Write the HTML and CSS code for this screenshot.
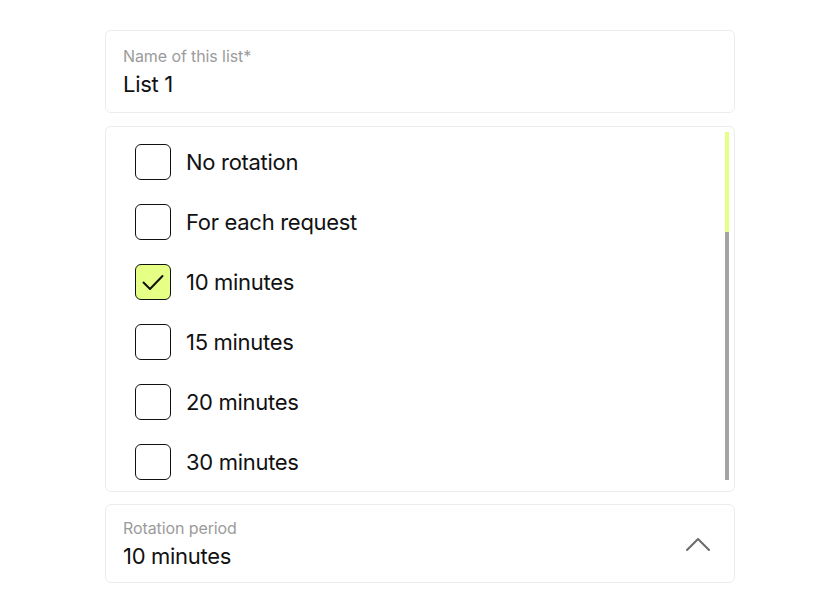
FILE: index.html
```html
<!DOCTYPE html>
<html>
<head>
<meta charset="utf-8">
<link rel="stylesheet" href="styles.css">
</head>
<body>
<main class="form">
  <section class="field name-field">
    <div class="field-label">Name of this list*</div>
    <div class="field-value">List 1</div>
  </section>

  <section class="options">
    <ul class="option-list">
      <li class="option"><span class="box"></span><span class="option-text">No rotation</span></li>
      <li class="option"><span class="box"></span><span class="option-text">For each request</span></li>
      <li class="option"><span class="box checked"><svg viewBox="0 0 36 36" width="36" height="36"><path d="M8.5 18.5 L15 25 L27.5 12" fill="none" stroke="#111" stroke-width="2" stroke-linecap="round" stroke-linejoin="round"/></svg></span><span class="option-text">10 minutes</span></li>
      <li class="option"><span class="box"></span><span class="option-text">15 minutes</span></li>
      <li class="option"><span class="box"></span><span class="option-text">20 minutes</span></li>
      <li class="option"><span class="box"></span><span class="option-text">30 minutes</span></li>
    </ul>
    <div class="scrollbar"><div class="thumb"></div></div>
  </section>

  <section class="field select">
    <div class="select-body">
      <div class="field-label">Rotation period</div>
      <div class="field-value">10 minutes</div>
    </div>
    <svg class="chevron" viewBox="0 0 26 16" width="26" height="16"><path d="M2 14 L13 3 L24 14" fill="none" stroke="#6b6b6b" stroke-width="2" stroke-linecap="round" stroke-linejoin="round"/></svg>
  </section>
</main>
</body>
</html>
```

FILE: styles.css
```css
* { box-sizing: border-box; }
html, body { margin: 0; padding: 0; background: #fff; }
body {
  font-family: Inter, "Noto Sans", "Liberation Sans", sans-serif;
  color: #111;
}
.form {
  width: 630px;
  margin: 30px 0 0 105px;
  display: flex;
  flex-direction: column;
}
.field {
  border: 1px solid #ececec;
  border-radius: 6px;
}
.name-field {
  height: 83px;
  padding: 15px 17px 14px;
}
.field-label {
  font-size: 16px;
  line-height: 20px;
  color: #9b9b9b;
  letter-spacing: -0.1px;
}
.field-value {
  margin-top: 4px;
  font-size: 22px;
  line-height: 28px;
  color: #111;
  letter-spacing: -0.3px;
}
.options {
  margin-top: 13px;
  border: 1px solid #ececec;
  border-radius: 6px;
  height: 366px;
  display: flex;
  padding: 5px 5px 0 0;
}
.option-list {
  list-style: none;
  margin: 0;
  padding: 0 0 0 29px;
  flex: 1;
  height: 359px;
  overflow: hidden;
}
.option {
  height: 60px;
  display: flex;
  align-items: center;
  gap: 15px;
}
.box {
  width: 36px;
  height: 36px;
  border: 1.5px solid #111;
  border-radius: 6px;
  flex: none;
  position: relative;
}
.box.checked { background: #e6ff85; }
.box svg { position: absolute; left: -1.5px; top: -1.5px; }
.option-text {
  font-size: 22px;
  letter-spacing: -0.3px;
  color: #111;
}
.scrollbar {
  width: 4px;
  height: 348px;
  background: #a3a3a3;
  flex: none;
}
.thumb {
  height: 100px;
  background: #e6ff85;
}
.select {
  margin-top: 12px;
  height: 79px;
  display: flex;
  align-items: center;
  padding: 13px 23px 12px 17px;
}
.select-body { flex: 1; }
.chevron { flex: none; }
```
